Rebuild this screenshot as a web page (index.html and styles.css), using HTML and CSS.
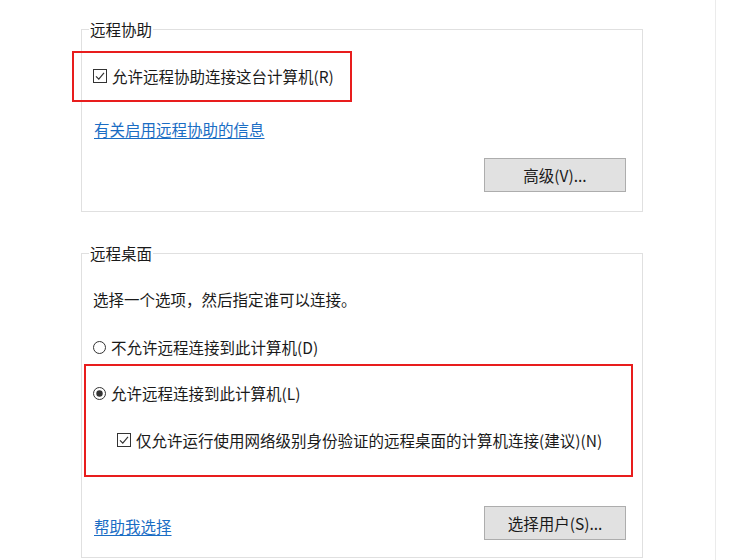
FILE: index.html
```html
<!DOCTYPE html>
<html lang="zh-CN">
<head>
    <meta charset="UTF-8">
    <meta name="viewport" content="width=device-width, initial-scale=1.0">
    <title>远程设置</title>
    <link rel="stylesheet" href="styles.css">
</head>
<body>
    <div class="page">
        <div class="group group-assist">
            <div class="group-title">远程协助</div>
            <div class="mark mark-assist">
                <label class="option">
                    <svg class="check" width="14" height="14" viewBox="0 0 14 14"><rect x="0.5" y="0.5" width="13" height="13" fill="#fff" stroke="#333"/><path d="M3 7.3 L5.8 10.1 L11 3.9" fill="none" stroke="#333" stroke-width="1.2"/></svg>
                    <span>允许远程协助连接这台计算机(R)</span>
                </label>
            </div>
            <a class="link link-info" href="#">有关启用远程协助的信息</a>
            <div class="actions">
                <button class="btn">高级(V)...</button>
            </div>
        </div>

        <div class="group group-desktop">
            <div class="group-title">远程桌面</div>
            <p class="desc">选择一个选项，然后指定谁可以连接。</p>
            <label class="option option-deny">
                <svg class="radio" width="13" height="13" viewBox="0 0 13 13"><circle cx="6.5" cy="6.5" r="6" fill="#fff" stroke="#333"/></svg>
                <span>不允许远程连接到此计算机(D)</span>
            </label>
            <div class="mark mark-desktop">
                <label class="option">
                    <svg class="radio" width="13" height="13" viewBox="0 0 13 13"><circle cx="6.5" cy="6.5" r="6" fill="#fff" stroke="#333"/><circle cx="6.5" cy="6.5" r="3.2" fill="#333"/></svg>
                    <span>允许远程连接到此计算机(L)</span>
                </label>
                <label class="option option-sub">
                    <svg class="check" width="14" height="14" viewBox="0 0 14 14"><rect x="0.5" y="0.5" width="13" height="13" fill="#fff" stroke="#333"/><path d="M3 7.3 L5.8 10.1 L11 3.9" fill="none" stroke="#333" stroke-width="1.2"/></svg>
                    <span>仅允许运行使用网络级别身份验证的远程桌面的计算机连接(建议)(N)</span>
                </label>
            </div>
            <div class="actions actions-split">
                <a class="link link-help" href="#">帮助我选择</a>
                <button class="btn">选择用户(S)...</button>
            </div>
        </div>
    </div>
</body>
</html>
```

FILE: styles.css
```css
body {
    margin: 0;
    background-color: #fff;
    font-family: "Noto Sans CJK SC", "Microsoft YaHei", sans-serif;
    font-size: 15.5px;
    line-height: 20px;
    color: #1a1a1a;
}
.page {
    width: 716px;
    height: 560px;
    box-sizing: border-box;
    padding-top: 29px;
    border-right: 1px solid #ebebeb;
    overflow: hidden;
}
.group {
    margin-left: 81px;
    width: 562px;
    box-sizing: border-box;
    border: 1px solid #e0e0e0;
    padding: 0 16px 19px 11px;
}
.group-desktop {
    margin-top: 41px;
    padding-bottom: 17px;
}
.group-title {
    width: fit-content;
    margin: -11px 0 0 -4px;
    padding: 0 1px;
    background-color: #fff;
}
.mark {
    box-sizing: border-box;
    border: 2px solid #e81d1d;
}
.mark-assist {
    margin: 12px 0 0 -21px;
    width: 280px;
    height: 51px;
    padding: 13px 0 0 19px;
}
.mark-desktop {
    margin: 7px 0 0 -9px;
    width: 549px;
    height: 113px;
    padding: 17px 0 0 7px;
}
.option {
    display: flex;
    align-items: center;
    gap: 5px;
    height: 20px;
}
.option svg {
    flex: none;
}
.option-deny {
    margin-top: 28px;
}
.option-sub {
    margin: 27px 0 0 24px;
}
.desc {
    margin: 26px 0 0;
}
.link {
    color: #1a6dc4;
    text-decoration: underline;
    text-underline-offset: 2px;
}
.link-info {
    display: block;
    width: fit-content;
    margin: 17px 0 0 1px;
}
.link-help {
    margin: 10px 0 0 1px;
}
.actions {
    display: flex;
    justify-content: flex-end;
    align-items: flex-start;
    margin-top: 19px;
}
.actions-split {
    justify-content: space-between;
    margin-top: 29px;
}
.btn {
    width: 142px;
    height: 34px;
    padding: 0;
    background-color: #e1e1e1;
    border: 1px solid #adadad;
    font: inherit;
    color: #1a1a1a;
}
```
